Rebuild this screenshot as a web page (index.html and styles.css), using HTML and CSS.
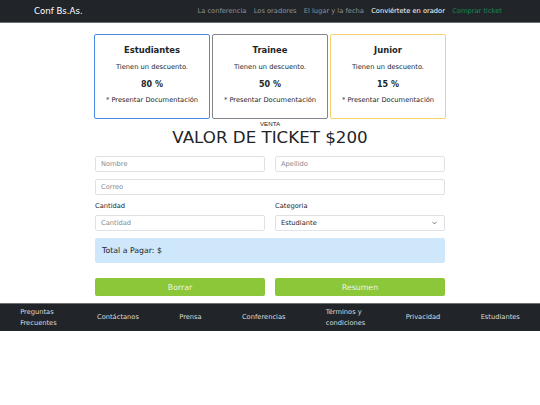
FILE: index.html
```html
<!DOCTYPE html>
<html lang="es">
<head>
<meta charset="utf-8">
<title>Conf Bs.As.</title>
<link rel="stylesheet" href="styles.css">
</head>
<body>
<nav class="navbar">
  <a class="brand" href="#">Conf Bs.As.</a>
  <ul class="nav-links">
    <li><a href="#">La conferencia</a></li>
    <li><a href="#">Los oradores</a></li>
    <li><a href="#">El lugar y la fecha</a></li>
    <li><a class="active" href="#">Conviértete en orador</a></li>
    <li><a class="buy" href="#">Comprar ticket</a></li>
  </ul>
</nav>

<main class="container">
  <section class="cards">
    <div class="card card-blue">
      <h5>Estudiantes</h5>
      <p>Tienen un descuento.</p>
      <p class="pct">80 %</p>
      <p>* Presentar Documentación</p>
    </div>
    <div class="card card-gray">
      <h5>Trainee</h5>
      <p>Tienen un descuento.</p>
      <p class="pct">50 %</p>
      <p>* Presentar Documentación</p>
    </div>
    <div class="card card-yellow">
      <h5>Junior</h5>
      <p>Tienen un descuento.</p>
      <p class="pct">15 %</p>
      <p>* Presentar Documentación</p>
    </div>
  </section>

  <section class="sale">
    <div class="eyebrow">VENTA</div>
    <h1 class="title">VALOR DE TICKET $200</h1>
  </section>

  <form class="form">
    <div class="row">
      <input class="field" type="text" placeholder="Nombre">
      <input class="field" type="text" placeholder="Apellido">
    </div>
    <div class="row">
      <input class="field" type="email" placeholder="Correo">
    </div>
    <div class="row">
      <div class="group">
        <label class="label">Cantidad</label>
        <input class="field" type="number" placeholder="Cantidad">
      </div>
      <div class="group">
        <label class="label">Categoria</label>
        <div class="select">
          <span>Estudiante</span>
          <svg width="5" height="4" viewBox="0 0 16 10"><path d="M2 2l6 6 6-6" fill="none" stroke="#495057" stroke-width="2.4" stroke-linecap="round" stroke-linejoin="round"/></svg>
        </div>
      </div>
    </div>
    <div class="alert">Total a Pagar: $</div>
    <div class="row buttons">
      <button type="reset" class="btn">Borrar</button>
      <button type="button" class="btn">Resumen</button>
    </div>
  </form>
</main>

<footer class="footer">
  <a href="#">Preguntas<br>Frecuentes</a>
  <a href="#">Contáctanos</a>
  <a href="#">Prensa</a>
  <a href="#">Conferencias</a>
  <a href="#">Términos y<br>condiciones</a>
  <a href="#">Privacidad</a>
  <a href="#">Estudiantes</a>
</footer>
</body>
</html>
```

FILE: styles.css
```css
* { box-sizing: border-box; }
body {
  margin: 0;
  font-family: "DejaVu Sans", sans-serif;
  font-size: 6.7px;
  color: #212529;
  background: #fff;
}
a { text-decoration: none; }

.navbar {
  height: 23px;
  background: #212529;
  border-bottom: 1px solid #6c6f73;
  display: flex;
  align-items: center;
  justify-content: space-between;
  padding: 0 38px 0 34px;
}
.brand {
  color: #fff;
  font-size: 8.6px;
}
.nav-links {
  list-style: none;
  margin: 0;
  padding: 0;
  display: flex;
  gap: 7.25px;
  font-size: 6.7px;
}
.nav-links a { color: #8f9194; }
.nav-links a.active { color: #fff; }
.nav-links a.buy { color: #198754; }

.container {
  width: 352px;
  margin: 11px auto 0;
}
.cards {
  display: flex;
  gap: 2px;
}
.card {
  flex: 1;
  height: 85px;
  border: 1px solid #6c757d;
  border-radius: 2px;
  text-align: center;
  padding-top: 10px;
}
.card-blue { border-color: #4a8be6; }
.card-gray { border-color: #80868c; }
.card-yellow { border-color: #f6d36a; }
.card h5 {
  margin: 0 0 8px;
  font-size: 8.4px;
  font-weight: bold;
  line-height: 10px;
}
.card p {
  margin: 0 0 8px;
  line-height: 9px;
}
.card p.pct {
  font-weight: bold;
  font-size: 8px;
  margin-bottom: 7px;
}

.sale { text-align: center; }
.eyebrow {
  font-family: "Liberation Sans", sans-serif;
  font-size: 6.2px;
  line-height: 7px;
  margin-top: 1px;
}
.title {
  margin: 0;
  font-size: 16.7px;
  font-weight: normal;
  line-height: 20px;
}

.form {
  padding: 0 1px;
  margin-top: 9px;
}
.row {
  display: flex;
  gap: 10px;
  margin-bottom: 7px;
}
.row > * { flex: 1; min-width: 0; }
.group { display: flex; flex-direction: column; }
.label {
  line-height: 8px;
  margin: 0 0 5px;
}
.field, .select {
  height: 16px;
  border: 1px solid #dee2e6;
  border-radius: 2px;
  font-family: inherit;
  font-size: 6.7px;
  padding: 0 5px;
  color: #212529;
  background: #fff;
  width: 100%;
  margin: 0;
}
.field::placeholder { color: #858a90; }
.select {
  display: flex;
  align-items: center;
  justify-content: space-between;
  padding-right: 7px;
}
.alert {
  height: 25px;
  background: #cfe7fb;
  border-radius: 2px;
  display: flex;
  align-items: center;
  padding: 0 7px;
  font-size: 7.8px;
  margin-bottom: 15px;
}
.buttons { margin-bottom: 0; }
.btn {
  height: 18px;
  border: none;
  border-radius: 2px;
  background: #8cc739;
  color: #eef6e4;
  font-family: inherit;
  font-size: 7.8px;
}

.footer {
  margin-top: 7px;
  height: 28px;
  background: #212529;
  border-top: 1px solid #6c6f73;
  display: flex;
  align-items: center;
  justify-content: space-around;
}
.footer a {
  color: #dcdddf;
  line-height: 11px;
}
```
